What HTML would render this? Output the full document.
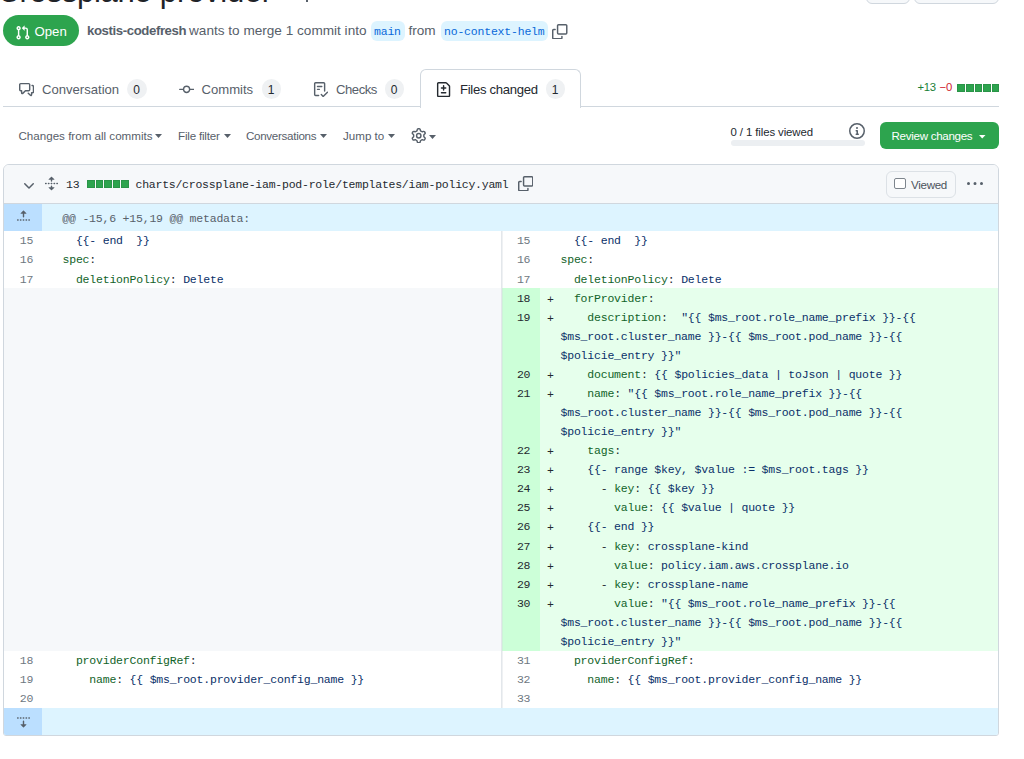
<!DOCTYPE html><html><head><meta charset="utf-8"><style>
html,body{margin:0;padding:0;background:#fff;}
body{width:1024px;height:759px;overflow:hidden;position:relative;font-family:"Liberation Sans",sans-serif;}
.abs{position:absolute;}
</style></head><body>
<div style="position:absolute;left:-2.5px;top:-23.94px;font-family:'Liberation Sans',sans-serif;font-size:31px;font-weight:400;color:#1f2328;letter-spacing:-0.3px;white-space:pre;line-height:1;">Crossplane <span style="letter-spacing:0.06px">provider</span></div>
<div class="abs" style="left:305.5px;top:0;width:2px;height:1.8px;background:#57606a"></div>
<div class="abs" style="left:866px;top:-30px;width:42px;height:32px;background:#f6f8fa;border:1px solid #d0d7de;border-radius:6px"></div>
<div class="abs" style="left:914px;top:-30px;width:83px;height:32px;background:#f6f8fa;border:1px solid #d0d7de;border-radius:6px"></div>
<div class="abs" style="left:3px;top:15px;width:76px;height:31px;background:#2da44e;border-radius:16px"></div>
<svg style="position:absolute;left:15.1px;top:24.8px;" width="15.4" height="15.4" viewBox="0 0 16 16" fill="#fff"><path d="M1.5 3.25a2.25 2.25 0 1 1 3 2.122v5.256a2.251 2.251 0 1 1-1.5 0V5.372A2.25 2.25 0 0 1 1.5 3.25Zm5.677-.177L9.573.677A.25.25 0 0 1 10 .854V2.5h1A2.5 2.5 0 0 1 13.5 5v5.628a2.251 2.251 0 1 1-1.5 0V5a1 1 0 0 0-1-1h-1v1.646a.25.25 0 0 1-.427.177L7.177 3.427a.25.25 0 0 1 0-.354ZM3.75 2.5a.75.75 0 1 0 0 1.5.75.75 0 0 0 0-1.5Zm0 9.5a.75.75 0 1 0 0 1.5.75.75 0 0 0 0-1.5Zm8.25.75a.75.75 0 1 0 1.5 0 .75.75 0 0 0-1.5 0Z"/></svg>
<div style="position:absolute;left:34.5px;top:24.83px;font-family:'Liberation Sans',sans-serif;font-size:13.2px;font-weight:400;color:#fff;letter-spacing:0px;white-space:pre;line-height:1;">Open</div>
<div style="position:absolute;left:87px;top:24.33px;font-family:'Liberation Sans',sans-serif;font-size:13.2px;font-weight:700;color:#57606a;letter-spacing:-0.4px;white-space:pre;line-height:1;">kostis-codefresh</div>
<div style="position:absolute;left:189px;top:23.99px;font-family:'Liberation Sans',sans-serif;font-size:13.6px;font-weight:400;color:#57606a;letter-spacing:0px;white-space:pre;line-height:1;">wants to merge 1 commit into</div>
<div class="abs" style="left:370.5px;top:21px;width:34.5px;height:20px;background:#ddf4ff;border-radius:6px"></div>
<div style="position:absolute;left:374px;top:26.19px;font-family:'Liberation Mono',monospace;font-size:11.5px;font-weight:400;color:#0969da;letter-spacing:-0.2px;white-space:pre;line-height:1;">main</div>
<div style="position:absolute;left:408.5px;top:23.99px;font-family:'Liberation Sans',sans-serif;font-size:13.6px;font-weight:400;color:#57606a;letter-spacing:0px;white-space:pre;line-height:1;">from</div>
<div class="abs" style="left:440.5px;top:21px;width:107.5px;height:20px;background:#ddf4ff;border-radius:6px"></div>
<div style="position:absolute;left:444px;top:26.19px;font-family:'Liberation Mono',monospace;font-size:11.5px;font-weight:400;color:#0969da;letter-spacing:-0.2px;white-space:pre;line-height:1;">no-context-helm</div>
<svg style="position:absolute;left:552px;top:23.5px;" width="15.5" height="15.5" viewBox="0 0 16 16" fill="#57606a"><path d="M0 6.75C0 5.784.784 5 1.75 5h1.5a.75.75 0 0 1 0 1.5h-1.5a.25.25 0 0 0-.25.25v7.5c0 .138.112.25.25.25h7.5a.25.25 0 0 0 .25-.25v-1.5a.75.75 0 0 1 1.5 0v1.5A1.75 1.75 0 0 1 9.25 16h-7.5A1.75 1.75 0 0 1 0 14.25ZM5 1.75C5 .784 5.784 0 6.75 0h7.5C15.216 0 16 .784 16 1.75v7.5A1.75 1.75 0 0 1 14.25 11h-7.5A1.75 1.75 0 0 1 5 9.25Zm1.75-.25a.25.25 0 0 0-.25.25v7.5c0 .138.112.25.25.25h7.5a.25.25 0 0 0 .25-.25v-7.5a.25.25 0 0 0-.25-.25Z"/></svg>
<div class="abs" style="left:3px;top:106px;width:996px;height:1px;background:#d0d7de"></div>
<div class="abs" style="left:420px;top:68.5px;width:159px;height:38.5px;background:#fff;border:1px solid #d0d7de;border-bottom:none;border-radius:6px 6px 0 0"></div>
<svg style="position:absolute;left:19px;top:82px;" width="15.2" height="15.2" viewBox="0 0 16 16" fill="#57606a"><path d="M1.75 1h8.5c.966 0 1.75.784 1.75 1.75v5.5A1.75 1.75 0 0 1 10.25 10H7.061l-2.574 2.573A1.458 1.458 0 0 1 2 11.543V10h-.25A1.75 1.75 0 0 1 0 8.25v-5.5C0 1.784.784 1 1.75 1ZM1.5 2.75v5.5c0 .138.112.25.25.25h1a.75.75 0 0 1 .75.75v2.19l2.72-2.72a.749.749 0 0 1 .53-.22h3.5a.25.25 0 0 0 .25-.25v-5.5a.25.25 0 0 0-.25-.25h-8.5a.25.25 0 0 0-.25.25Zm13 2a.25.25 0 0 0-.25-.25h-.5a.75.75 0 0 1 0-1.5h.5c.966 0 1.75.784 1.75 1.75v5.5A1.75 1.75 0 0 1 14.25 12H14v1.543a1.458 1.458 0 0 1-2.487 1.030L9.22 12.28a.749.749 0 0 1 .326-1.275.749.749 0 0 1 .734.215l2.22 2.22v-2.19a.75.75 0 0 1 .75-.75h1a.25.25 0 0 0 .25-.25Z"/></svg>
<div style="position:absolute;left:42px;top:82.71px;font-family:'Liberation Sans',sans-serif;font-size:13.1px;font-weight:400;color:#57606a;letter-spacing:0px;white-space:pre;line-height:1;">Conversation</div>
<div class="abs" style="left:127px;top:79px;width:19.5px;height:19.5px;border-radius:10px;background:#eff1f3"></div><div style="position:absolute;left:133.3px;top:83.64px;font-family:'Liberation Sans',sans-serif;font-size:12px;font-weight:400;color:#24292f;letter-spacing:0px;white-space:pre;line-height:1;">0</div>
<svg style="position:absolute;left:178.5px;top:82px;" width="15.2" height="15.2" viewBox="0 0 16 16" fill="#57606a"><path d="M11.93 8.5a4.002 4.002 0 0 1-7.86 0H.75a.75.75 0 0 1 0-1.5h3.32a4.002 4.002 0 0 1 7.86 0h3.32a.75.75 0 0 1 0 1.5Zm-1.43-.75a2.5 2.5 0 1 0-5 0 2.5 2.5 0 0 0 5 0Z"/></svg>
<div style="position:absolute;left:201.5px;top:82.71px;font-family:'Liberation Sans',sans-serif;font-size:13.1px;font-weight:400;color:#57606a;letter-spacing:0px;white-space:pre;line-height:1;">Commits</div>
<div class="abs" style="left:261.5px;top:79px;width:19.5px;height:19.5px;border-radius:10px;background:#eff1f3"></div><div style="position:absolute;left:267.8px;top:83.64px;font-family:'Liberation Sans',sans-serif;font-size:12px;font-weight:400;color:#24292f;letter-spacing:0px;white-space:pre;line-height:1;">1</div>
<svg style="position:absolute;left:313.3px;top:82px;" width="15.2" height="15.2" viewBox="0 0 16 16" fill="#57606a"><path d="M2.5 1.75v11.5c0 .138.112.25.25.25h3.17a.75.75 0 0 1 0 1.5H2.75A1.75 1.75 0 0 1 1 13.250V1.75C1 .784 1.784 0 2.75 0h8.5C12.216 0 13 .784 13 1.75v7.736a.75.75 0 0 1-1.5 0V1.75a.25.25 0 0 0-.25-.25h-8.5a.25.25 0 0 0-.25.25Zm13.274 9.537v-.001l-4.557 4.45a.75.75 0 0 1-1.055-.008l-1.943-1.95a.75.75 0 0 1 1.062-1.058l1.419 1.425 4.026-3.932a.75.75 0 1 1 1.048 1.074ZM4.75 4h4.5a.75.75 0 0 1 0 1.5h-4.5a.75.75 0 0 1 0-1.5ZM4 7.75A.75.75 0 0 1 4.75 7h2a.75.75 0 0 1 0 1.5h-2A.75.75 0 0 1 4 7.75Z"/></svg>
<div style="position:absolute;left:336px;top:82.71px;font-family:'Liberation Sans',sans-serif;font-size:13.1px;font-weight:400;color:#57606a;letter-spacing:-0.45px;white-space:pre;line-height:1;">Checks</div>
<div class="abs" style="left:384.5px;top:79px;width:19.5px;height:19.5px;border-radius:10px;background:#eff1f3"></div><div style="position:absolute;left:390.8px;top:83.64px;font-family:'Liberation Sans',sans-serif;font-size:12px;font-weight:400;color:#24292f;letter-spacing:0px;white-space:pre;line-height:1;">0</div>
<svg style="position:absolute;left:436.3px;top:82px;" width="15.2" height="15.2" viewBox="0 0 16 16" fill="#24292f"><path d="M1 1.75C1 .784 1.784 0 2.75 0h7.586c.464 0 .909.184 1.237.513l2.914 2.914c.329.328.513.773.513 1.237v9.586A1.75 1.75 0 0 1 13.25 16H2.75A1.75 1.75 0 0 1 1 14.25Zm1.75-.25a.25.25 0 0 0-.25.25v12.5c0 .138.112.25.25.25h10.5a.25.25 0 0 0 .25-.25V4.664a.25.25 0 0 0-.073-.177l-2.914-2.914a.25.25 0 0 0-.177-.073ZM8 3.25a.75.75 0 0 1 .75.75v1.5h1.5a.75.75 0 0 1 0 1.5h-1.5v1.5a.75.75 0 0 1-1.5 0V7h-1.5a.75.75 0 0 1 0-1.5h1.5V4A.75.75 0 0 1 8 3.25Zm-3 8a.75.75 0 0 1 .75-.75h4.5a.75.75 0 0 1 0 1.5h-4.5a.75.75 0 0 1-.75-.75Z"/></svg>
<div style="position:absolute;left:460px;top:82.71px;font-family:'Liberation Sans',sans-serif;font-size:13.1px;font-weight:400;color:#24292f;letter-spacing:-0.3px;white-space:pre;line-height:1;">Files changed</div>
<div class="abs" style="left:545.5px;top:79px;width:19.5px;height:19.5px;border-radius:10px;background:#eff1f3"></div><div style="position:absolute;left:551.8px;top:83.64px;font-family:'Liberation Sans',sans-serif;font-size:12px;font-weight:400;color:#24292f;letter-spacing:0px;white-space:pre;line-height:1;">1</div>
<div style="position:absolute;left:917.5px;top:82.43px;font-family:'Liberation Sans',sans-serif;font-size:11.3px;font-weight:400;color:#1a7f37;letter-spacing:-0.3px;white-space:pre;line-height:1;">+13</div>
<div style="position:absolute;left:939.5px;top:82.43px;font-family:'Liberation Sans',sans-serif;font-size:11.3px;font-weight:400;color:#cf222e;letter-spacing:0px;white-space:pre;line-height:1;">−0</div>
<div class="abs" style="left:957px;top:84px;width:8px;height:8px;background:#2da44e;box-shadow:inset 0 0 0 1px rgba(27,31,36,0.12)"></div>
<div class="abs" style="left:966px;top:84px;width:8px;height:8px;background:#2da44e;box-shadow:inset 0 0 0 1px rgba(27,31,36,0.12)"></div>
<div class="abs" style="left:975px;top:84px;width:7px;height:8px;background:#2da44e;box-shadow:inset 0 0 0 1px rgba(27,31,36,0.12)"></div>
<div class="abs" style="left:983px;top:84px;width:8px;height:8px;background:#2da44e;box-shadow:inset 0 0 0 1px rgba(27,31,36,0.12)"></div>
<div class="abs" style="left:992px;top:84px;width:7px;height:8px;background:#2da44e;box-shadow:inset 0 0 0 1px rgba(27,31,36,0.12)"></div>
<div style="position:absolute;left:18.5px;top:130.18px;font-family:'Liberation Sans',sans-serif;font-size:11.6px;font-weight:400;color:#57606a;letter-spacing:0px;white-space:pre;line-height:1;">Changes from all commits</div>
<svg style="position:absolute;left:155px;top:134.2px" width="7" height="4" viewBox="0 0 7 4"><path d="M0 0H7L3.5 4Z" fill="#57606a"/></svg>
<div style="position:absolute;left:178px;top:130.18px;font-family:'Liberation Sans',sans-serif;font-size:11.6px;font-weight:400;color:#57606a;letter-spacing:-0.2px;white-space:pre;line-height:1;">File filter</div>
<svg style="position:absolute;left:224px;top:134.2px" width="7" height="4" viewBox="0 0 7 4"><path d="M0 0H7L3.5 4Z" fill="#57606a"/></svg>
<div style="position:absolute;left:246px;top:130.18px;font-family:'Liberation Sans',sans-serif;font-size:11.6px;font-weight:400;color:#57606a;letter-spacing:-0.3px;white-space:pre;line-height:1;">Conversations</div>
<svg style="position:absolute;left:320px;top:134.2px" width="7" height="4" viewBox="0 0 7 4"><path d="M0 0H7L3.5 4Z" fill="#57606a"/></svg>
<div style="position:absolute;left:343px;top:130.18px;font-family:'Liberation Sans',sans-serif;font-size:11.6px;font-weight:400;color:#57606a;letter-spacing:0px;white-space:pre;line-height:1;">Jump to</div>
<svg style="position:absolute;left:388px;top:134.2px" width="7" height="4" viewBox="0 0 7 4"><path d="M0 0H7L3.5 4Z" fill="#57606a"/></svg>
<svg style="position:absolute;left:410.5px;top:127.5px;" width="15.5" height="15.5" viewBox="0 0 16 16" fill="#57606a"><path d="M8 0a8.2 8.2 0 0 1 .701.031C9.444.095 9.99.645 10.16 1.29l.288 1.107c.018.066.079.158.212.224.231.114.454.243.668.386.123.082.233.09.299.071l1.103-.303c.644-.176 1.392.021 1.82.63.27.385.506.792.704 1.218.315.675.111 1.422-.364 1.891l-.814.806c-.049.048-.098.147-.088.294.016.257.016.515 0 .772-.01.147.038.246.088.294l.814.806c.475.469.679 1.216.364 1.891a7.977 7.977 0 0 1-.704 1.217c-.428.61-1.176.807-1.82.63l-1.102-.302c-.067-.019-.177-.011-.3.071a5.909 5.909 0 0 1-.668.386c-.133.066-.194.158-.211.224l-.29 1.106c-.168.646-.715 1.196-1.458 1.26a8.006 8.006 0 0 1-1.402 0c-.743-.064-1.289-.614-1.458-1.26l-.289-1.106c-.018-.066-.079-.158-.212-.224a5.738 5.738 0 0 1-.668-.386c-.123-.082-.233-.09-.299-.071l-1.103.303c-.644.176-1.392-.021-1.82-.63a8.12 8.12 0 0 1-.704-1.218c-.315-.675-.111-1.422.363-1.891l.815-.806c.05-.048.098-.147.088-.294a6.214 6.214 0 0 1 0-.772c.01-.147-.038-.246-.088-.294l-.815-.806C.635 6.045.431 5.298.746 4.623a7.92 7.92 0 0 1 .704-1.217c.428-.61 1.176-.807 1.82-.63l1.102.302c.067.019.177.011.3-.071.214-.143.437-.272.668-.386.133-.066.194-.158.211-.224l.29-1.106C6.009.645 6.556.095 7.299.03 7.53.01 7.764 0 8 0Zm-.571 1.525c-.036.003-.108.036-.137.146l-.289 1.105c-.147.561-.549.967-.998 1.189-.173.086-.34.183-.5.29-.417.278-.97.423-1.529.27l-1.103-.303c-.109-.03-.175.016-.195.045-.22.312-.412.644-.573.99-.014.031-.021.11.059.19l.815.806c.411.406.562.957.53 1.456a4.709 4.709 0 0 0 0 .582c.032.499-.119 1.05-.53 1.456l-.815.806c-.081.08-.073.159-.059.19.162.346.353.677.573.989.02.03.085.076.195.046l1.102-.303c.56-.153 1.113-.008 1.53.27.161.107.328.204.501.29.447.222.85.629.997 1.189l.289 1.105c.029.109.101.143.137.146a6.6 6.6 0 0 0 1.142 0c.036-.003.108-.036.137-.146l.289-1.105c.147-.561.549-.967.998-1.189.173-.086.34-.183.5-.29.417-.278.97-.423 1.529-.27l1.103.303c.109.029.175-.016.195-.045.22-.313.411-.644.573-.99.014-.031.021-.11-.059-.19l-.815-.806c-.411-.406-.562-.957-.53-1.456a4.709 4.709 0 0 0 0-.582c-.032-.499.119-1.05.53-1.456l.815-.806c.081-.08.073-.159.059-.19a6.464 6.464 0 0 0-.573-.989c-.02-.03-.085-.076-.195-.046l-1.102.303c-.56.153-1.113.008-1.53-.27a4.440 4.440 0 0 0-.501-.29c-.447-.222-.85-.629-.997-1.189l-.289-1.105c-.029-.11-.101-.143-.137-.146a6.6 6.6 0 0 0-1.142 0ZM11 8a3 3 0 1 1-6 0 3 3 0 0 1 6 0ZM9.5 8a1.5 1.5 0 1 0-3.001.001A1.5 1.5 0 0 0 9.5 8Z"/></svg>
<svg style="position:absolute;left:429px;top:135px" width="7" height="4" viewBox="0 0 7 4"><path d="M0 0H7L3.5 4Z" fill="#57606a"/></svg>
<div style="position:absolute;left:730.5px;top:126.55px;font-family:'Liberation Sans',sans-serif;font-size:11.4px;font-weight:400;color:#24292f;letter-spacing:-0.1px;white-space:pre;line-height:1;">0 / 1 files viewed</div>
<div class="abs" style="left:731px;top:139.5px;width:133.5px;height:6.5px;background:#eceff2;border-radius:4px"></div>
<svg style="position:absolute;left:848.8px;top:122.8px;" width="16" height="16" viewBox="0 0 16 16" fill="#57606a"><path d="M0 8a8 8 0 1 1 16 0A8 8 0 0 1 0 8Zm8-6.5a6.5 6.5 0 1 0 0 13 6.5 6.5 0 0 0 0-13ZM6.5 7.75A.75.75 0 0 1 7.25 7h1a.75.75 0 0 1 .75.75v2.75h.25a.75.75 0 0 1 0 1.5h-2a.75.75 0 0 1 0-1.5h.25v-2h-.25a.75.75 0 0 1-.75-.75ZM8 6a1 1 0 1 1 0-2 1 1 0 0 1 0 2Z"/></svg>
<div class="abs" style="left:880px;top:122px;width:119px;height:26.5px;background:#2da44e;border-radius:6px"></div>
<div style="position:absolute;left:891.5px;top:130.18px;font-family:'Liberation Sans',sans-serif;font-size:11.6px;font-weight:400;color:#fff;letter-spacing:-0.3px;white-space:pre;line-height:1;">Review changes</div>
<svg style="position:absolute;left:979px;top:135.2px" width="6.5" height="3.6" viewBox="0 0 6.5 3.6"><path d="M0 0H6.5L3.25 3.6Z" fill="#fff"/></svg>
<div class="abs" style="left:3px;top:164px;width:994px;height:570px;border:1px solid #d0d7de;border-radius:6px 6px 3px 3px;overflow:hidden;background:#fff">
<div class="abs" style="left:0;top:0;width:994px;height:38px;background:#f6f8fa;border-bottom:1px solid #d0d7de"></div>
<svg style="position:absolute;left:16.5px;top:12.5px;" width="16" height="16" viewBox="0 0 16 16" fill="#57606a"><path d="M12.78 5.22a.749.749 0 0 1 0 1.06l-4.25 4.25a.749.749 0 0 1-1.06 0L3.22 6.28a.749.749 0 1 1 1.06-1.06L8 8.939l3.72-3.719a.749.749 0 0 1 1.06 0Z"/></svg>
<svg style="position:absolute;left:40px;top:11px;" width="15" height="15" viewBox="0 0 16 16" fill="#57606a"><path d="m8.177.677 2.896 2.896a.25.25 0 0 1-.177.427H8.75v1.25a.75.75 0 0 1-1.5 0V4H5.104a.25.25 0 0 1-.177-.427L7.823.677a.25.25 0 0 1 .354 0ZM7.25 10.750a.75.75 0 0 1 1.5 0V12h2.146a.25.25 0 0 1 .177.427l-2.896 2.896a.25.25 0 0 1-.354 0l-2.896-2.896A.25.25 0 0 1 5.104 12H7.25v-1.25Zm-5-2a.75.75 0 0 0 0-1.5h-.5a.75.75 0 0 0 0 1.5h.5ZM6 8a.75.75 0 0 1-.75.75h-.5a.75.75 0 0 1 0-1.5h.5A.75.75 0 0 1 6 8Zm2.25.75a.75.75 0 0 0 0-1.5h-.5a.75.75 0 0 0 0 1.5h.5ZM12 8a.75.75 0 0 1-.75.75h-.5a.75.75 0 0 1 0-1.5h.5A.75.75 0 0 1 12 8Zm2.25.75a.75.75 0 0 0 0-1.5h-.5a.75.75 0 0 0 0 1.5h.5Z"/></svg>
<div style="position:absolute;left:62px;top:13.79px;font-family:'Liberation Mono',monospace;font-size:11.5px;font-weight:400;color:#24292f;letter-spacing:-0.2px;white-space:pre;line-height:1;">13</div>
<div class="abs" style="left:83px;top:15px;width:8px;height:8px;background:#2da44e;box-shadow:inset 0 0 0 1px rgba(27,31,36,0.12)"></div>
<div class="abs" style="left:92px;top:15px;width:7px;height:8px;background:#2da44e;box-shadow:inset 0 0 0 1px rgba(27,31,36,0.12)"></div>
<div class="abs" style="left:100px;top:15px;width:8px;height:8px;background:#2da44e;box-shadow:inset 0 0 0 1px rgba(27,31,36,0.12)"></div>
<div class="abs" style="left:109px;top:15px;width:7px;height:8px;background:#2da44e;box-shadow:inset 0 0 0 1px rgba(27,31,36,0.12)"></div>
<div class="abs" style="left:117px;top:15px;width:8px;height:8px;background:#2da44e;box-shadow:inset 0 0 0 1px rgba(27,31,36,0.12)"></div>
<div style="position:absolute;left:131.5px;top:13.79px;font-family:'Liberation Mono',monospace;font-size:11.5px;font-weight:400;color:#24292f;letter-spacing:-0.242px;white-space:pre;line-height:1;">charts/crossplane-iam-pod-role/templates/iam-policy.yaml</div>
<svg style="position:absolute;left:513.5px;top:10.5px;" width="15.5" height="15.5" viewBox="0 0 16 16" fill="#57606a"><path d="M0 6.75C0 5.784.784 5 1.75 5h1.5a.75.75 0 0 1 0 1.5h-1.5a.25.25 0 0 0-.25.25v7.5c0 .138.112.25.25.25h7.5a.25.25 0 0 0 .25-.25v-1.5a.75.75 0 0 1 1.5 0v1.5A1.75 1.75 0 0 1 9.25 16h-7.5A1.75 1.75 0 0 1 0 14.25ZM5 1.75C5 .784 5.784 0 6.75 0h7.5C15.216 0 16 .784 16 1.75v7.5A1.75 1.75 0 0 1 14.25 11h-7.5A1.75 1.75 0 0 1 5 9.25Zm1.75-.25a.25.25 0 0 0-.25.25v7.5c0 .138.112.25.25.25h7.5a.25.25 0 0 0 .25-.25v-7.5a.25.25 0 0 0-.25-.25Z"/></svg>
<div class="abs" style="left:881.5px;top:6px;width:68px;height:24.8px;border:1px solid #dce1e6;border-radius:6px;background:#f6f8fa"></div>
<div class="abs" style="left:890px;top:12.8px;width:9.6px;height:9.6px;border:1.8px solid #7d858d;border-radius:2px;background:#fff"></div>
<div style="position:absolute;left:907px;top:13.68px;font-family:'Liberation Sans',sans-serif;font-size:11.6px;font-weight:400;color:#4b535c;letter-spacing:-0.3px;white-space:pre;line-height:1;">Viewed</div>
<svg style="position:absolute;left:963px;top:11px;" width="16" height="16" viewBox="0 0 16 16" fill="#57606a"><path d="M8 9a1.5 1.5 0 1 0 0-3 1.5 1.5 0 0 0 0 3ZM1.5 9a1.5 1.5 0 1 0 0-3 1.5 1.5 0 0 0 0 3Zm13 0a1.5 1.5 0 1 0 0-3 1.5 1.5 0 0 0 0 3Z"/></svg>
<div class="abs" style="left:0;top:39px;width:994px;height:27px;background:#ddf4ff"></div>
<div class="abs" style="left:0;top:39px;width:38px;height:27px;background:#bbdfff"></div>
<svg style="position:absolute;left:12px;top:43.5px;" width="15" height="15" viewBox="0 0 16 16" fill="#57606a"><path d="M7.823 1.677 4.927 4.573A.25.25 0 0 0 5.104 5H7.25v3.236a.75.75 0 1 0 1.5 0V5h2.146a.25.25 0 0 0 .177-.427L8.177 1.677a.25.25 0 0 0-.354 0ZM13.75 11a.75.75 0 0 0 0 1.5h.5a.75.75 0 0 0 0-1.5h-.5Zm-3.75.75a.75.75 0 0 1 .75-.75h.5a.75.75 0 0 1 0 1.5h-.5a.75.75 0 0 1-.75-.75ZM7.75 11a.75.75 0 0 0 0 1.5h.5a.75.75 0 0 0 0-1.5h-.5ZM4 11.75a.75.75 0 0 1 .75-.75h.5a.75.75 0 0 1 0 1.5h-.5a.75.75 0 0 1-.75-.75ZM1.75 11a.75.75 0 0 0 0 1.5h.5a.75.75 0 0 0 0-1.5h-.5Z"/></svg>
<div style="position:absolute;left:58.3px;top:48.19px;font-family:'Liberation Mono',monospace;font-size:11.5px;font-weight:400;color:#57606a;letter-spacing:-0.2px;white-space:pre;line-height:1;">@@ -15,6 +15,19 @@ metadata:</div>
<div style="position:absolute;left:15.7px;top:70.39px;font-family:'Liberation Mono',monospace;font-size:11.5px;font-weight:400;color:#6e7781;letter-spacing:-0.2px;white-space:pre;line-height:1;">15</div>
<div style="position:absolute;left:58.5px;top:70.39px;font-family:'Liberation Mono',monospace;font-size:11.5px;font-weight:400;color:#24292f;letter-spacing:-0.2px;white-space:pre;line-height:1;"><span style="color:#0a3069">  {{- end  }}</span></div>
<div style="position:absolute;left:512.9px;top:70.39px;font-family:'Liberation Mono',monospace;font-size:11.5px;font-weight:400;color:#6e7781;letter-spacing:-0.2px;white-space:pre;line-height:1;">15</div>
<div style="position:absolute;left:556.5px;top:70.39px;font-family:'Liberation Mono',monospace;font-size:11.5px;font-weight:400;color:#24292f;letter-spacing:-0.2px;white-space:pre;line-height:1;"><span style="color:#0a3069">  {{- end  }}</span></div>
<div style="position:absolute;left:15.7px;top:89.46px;font-family:'Liberation Mono',monospace;font-size:11.5px;font-weight:400;color:#6e7781;letter-spacing:-0.2px;white-space:pre;line-height:1;">16</div>
<div style="position:absolute;left:58.5px;top:89.46px;font-family:'Liberation Mono',monospace;font-size:11.5px;font-weight:400;color:#24292f;letter-spacing:-0.2px;white-space:pre;line-height:1;"><span style="color:#116329">spec</span><span style="color:#24292f">:</span><span style="color:#0a3069"></span></div>
<div style="position:absolute;left:512.9px;top:89.46px;font-family:'Liberation Mono',monospace;font-size:11.5px;font-weight:400;color:#6e7781;letter-spacing:-0.2px;white-space:pre;line-height:1;">16</div>
<div style="position:absolute;left:556.5px;top:89.46px;font-family:'Liberation Mono',monospace;font-size:11.5px;font-weight:400;color:#24292f;letter-spacing:-0.2px;white-space:pre;line-height:1;"><span style="color:#116329">spec</span><span style="color:#24292f">:</span><span style="color:#0a3069"></span></div>
<div style="position:absolute;left:15.7px;top:108.53px;font-family:'Liberation Mono',monospace;font-size:11.5px;font-weight:400;color:#6e7781;letter-spacing:-0.2px;white-space:pre;line-height:1;">17</div>
<div style="position:absolute;left:58.5px;top:108.53px;font-family:'Liberation Mono',monospace;font-size:11.5px;font-weight:400;color:#24292f;letter-spacing:-0.2px;white-space:pre;line-height:1;">  <span style="color:#116329">deletionPolicy</span><span style="color:#24292f">:</span><span style="color:#0a3069"> Delete</span></div>
<div style="position:absolute;left:512.9px;top:108.53px;font-family:'Liberation Mono',monospace;font-size:11.5px;font-weight:400;color:#6e7781;letter-spacing:-0.2px;white-space:pre;line-height:1;">17</div>
<div style="position:absolute;left:556.5px;top:108.53px;font-family:'Liberation Mono',monospace;font-size:11.5px;font-weight:400;color:#24292f;letter-spacing:-0.2px;white-space:pre;line-height:1;">  <span style="color:#116329">deletionPolicy</span><span style="color:#24292f">:</span><span style="color:#0a3069"> Delete</span></div>
<div class="abs" style="left:0;top:123px;width:497px;height:19px;background:#f6f8fa"></div>
<div class="abs" style="left:498px;top:123px;width:38px;height:19px;background:#ccffd8"></div>
<div class="abs" style="left:536px;top:123px;width:458px;height:19px;background:#e6ffec"></div>
<div style="position:absolute;left:512.9px;top:127.6px;font-family:'Liberation Mono',monospace;font-size:11.5px;font-weight:400;color:#24292f;letter-spacing:-0.2px;white-space:pre;line-height:1;">18</div>
<div style="position:absolute;left:543px;top:128.6px;font-family:'Liberation Mono',monospace;font-size:11.5px;font-weight:400;color:#24292f;letter-spacing:-0.2px;white-space:pre;line-height:1;">+</div>
<div style="position:absolute;left:556.5px;top:127.6px;font-family:'Liberation Mono',monospace;font-size:11.5px;font-weight:400;color:#24292f;letter-spacing:-0.2px;white-space:pre;line-height:1;">  <span style="color:#116329">forProvider</span><span style="color:#24292f">:</span><span style="color:#0a3069"></span></div>
<div class="abs" style="left:0;top:142px;width:497px;height:19px;background:#f6f8fa"></div>
<div class="abs" style="left:498px;top:142px;width:38px;height:19px;background:#ccffd8"></div>
<div class="abs" style="left:536px;top:142px;width:458px;height:19px;background:#e6ffec"></div>
<div style="position:absolute;left:512.9px;top:146.67px;font-family:'Liberation Mono',monospace;font-size:11.5px;font-weight:400;color:#24292f;letter-spacing:-0.2px;white-space:pre;line-height:1;">19</div>
<div style="position:absolute;left:543px;top:147.67px;font-family:'Liberation Mono',monospace;font-size:11.5px;font-weight:400;color:#24292f;letter-spacing:-0.2px;white-space:pre;line-height:1;">+</div>
<div style="position:absolute;left:556.5px;top:146.67px;font-family:'Liberation Mono',monospace;font-size:11.5px;font-weight:400;color:#24292f;letter-spacing:-0.2px;white-space:pre;line-height:1;">    <span style="color:#116329">description</span><span style="color:#24292f">:</span><span style="color:#0a3069">  &quot;{{ $ms_root.role_name_prefix }}-{{</span></div>
<div class="abs" style="left:0;top:161px;width:497px;height:19px;background:#f6f8fa"></div>
<div class="abs" style="left:498px;top:161px;width:38px;height:19px;background:#ccffd8"></div>
<div class="abs" style="left:536px;top:161px;width:458px;height:19px;background:#e6ffec"></div>
<div style="position:absolute;left:556.5px;top:165.74px;font-family:'Liberation Mono',monospace;font-size:11.5px;font-weight:400;color:#24292f;letter-spacing:-0.2px;white-space:pre;line-height:1;"><span style="color:#0a3069">$ms_root.cluster_name }}-{{ $ms_root.pod_name }}-{{</span></div>
<div class="abs" style="left:0;top:180px;width:497px;height:19px;background:#f6f8fa"></div>
<div class="abs" style="left:498px;top:180px;width:38px;height:19px;background:#ccffd8"></div>
<div class="abs" style="left:536px;top:180px;width:458px;height:19px;background:#e6ffec"></div>
<div style="position:absolute;left:556.5px;top:184.81px;font-family:'Liberation Mono',monospace;font-size:11.5px;font-weight:400;color:#24292f;letter-spacing:-0.2px;white-space:pre;line-height:1;"><span style="color:#0a3069">$policie_entry }}&quot;</span></div>
<div class="abs" style="left:0;top:199px;width:497px;height:20px;background:#f6f8fa"></div>
<div class="abs" style="left:498px;top:199px;width:38px;height:20px;background:#ccffd8"></div>
<div class="abs" style="left:536px;top:199px;width:458px;height:20px;background:#e6ffec"></div>
<div style="position:absolute;left:512.9px;top:203.88px;font-family:'Liberation Mono',monospace;font-size:11.5px;font-weight:400;color:#24292f;letter-spacing:-0.2px;white-space:pre;line-height:1;">20</div>
<div style="position:absolute;left:543px;top:204.88px;font-family:'Liberation Mono',monospace;font-size:11.5px;font-weight:400;color:#24292f;letter-spacing:-0.2px;white-space:pre;line-height:1;">+</div>
<div style="position:absolute;left:556.5px;top:203.88px;font-family:'Liberation Mono',monospace;font-size:11.5px;font-weight:400;color:#24292f;letter-spacing:-0.2px;white-space:pre;line-height:1;">    <span style="color:#116329">document</span><span style="color:#24292f">:</span><span style="color:#0a3069"> {{ $policies_data | toJson | quote }}</span></div>
<div class="abs" style="left:0;top:219px;width:497px;height:19px;background:#f6f8fa"></div>
<div class="abs" style="left:498px;top:219px;width:38px;height:19px;background:#ccffd8"></div>
<div class="abs" style="left:536px;top:219px;width:458px;height:19px;background:#e6ffec"></div>
<div style="position:absolute;left:512.9px;top:222.95px;font-family:'Liberation Mono',monospace;font-size:11.5px;font-weight:400;color:#24292f;letter-spacing:-0.2px;white-space:pre;line-height:1;">21</div>
<div style="position:absolute;left:543px;top:223.95px;font-family:'Liberation Mono',monospace;font-size:11.5px;font-weight:400;color:#24292f;letter-spacing:-0.2px;white-space:pre;line-height:1;">+</div>
<div style="position:absolute;left:556.5px;top:222.95px;font-family:'Liberation Mono',monospace;font-size:11.5px;font-weight:400;color:#24292f;letter-spacing:-0.2px;white-space:pre;line-height:1;">    <span style="color:#116329">name</span><span style="color:#24292f">:</span><span style="color:#0a3069"> &quot;{{ $ms_root.role_name_prefix }}-{{</span></div>
<div class="abs" style="left:0;top:238px;width:497px;height:19px;background:#f6f8fa"></div>
<div class="abs" style="left:498px;top:238px;width:38px;height:19px;background:#ccffd8"></div>
<div class="abs" style="left:536px;top:238px;width:458px;height:19px;background:#e6ffec"></div>
<div style="position:absolute;left:556.5px;top:242.02px;font-family:'Liberation Mono',monospace;font-size:11.5px;font-weight:400;color:#24292f;letter-spacing:-0.2px;white-space:pre;line-height:1;"><span style="color:#0a3069">$ms_root.cluster_name }}-{{ $ms_root.pod_name }}-{{</span></div>
<div class="abs" style="left:0;top:257px;width:497px;height:19px;background:#f6f8fa"></div>
<div class="abs" style="left:498px;top:257px;width:38px;height:19px;background:#ccffd8"></div>
<div class="abs" style="left:536px;top:257px;width:458px;height:19px;background:#e6ffec"></div>
<div style="position:absolute;left:556.5px;top:261.09px;font-family:'Liberation Mono',monospace;font-size:11.5px;font-weight:400;color:#24292f;letter-spacing:-0.2px;white-space:pre;line-height:1;"><span style="color:#0a3069">$policie_entry }}&quot;</span></div>
<div class="abs" style="left:0;top:276px;width:497px;height:19px;background:#f6f8fa"></div>
<div class="abs" style="left:498px;top:276px;width:38px;height:19px;background:#ccffd8"></div>
<div class="abs" style="left:536px;top:276px;width:458px;height:19px;background:#e6ffec"></div>
<div style="position:absolute;left:512.9px;top:280.16px;font-family:'Liberation Mono',monospace;font-size:11.5px;font-weight:400;color:#24292f;letter-spacing:-0.2px;white-space:pre;line-height:1;">22</div>
<div style="position:absolute;left:543px;top:281.16px;font-family:'Liberation Mono',monospace;font-size:11.5px;font-weight:400;color:#24292f;letter-spacing:-0.2px;white-space:pre;line-height:1;">+</div>
<div style="position:absolute;left:556.5px;top:280.16px;font-family:'Liberation Mono',monospace;font-size:11.5px;font-weight:400;color:#24292f;letter-spacing:-0.2px;white-space:pre;line-height:1;">    <span style="color:#116329">tags</span><span style="color:#24292f">:</span><span style="color:#0a3069"></span></div>
<div class="abs" style="left:0;top:295px;width:497px;height:19px;background:#f6f8fa"></div>
<div class="abs" style="left:498px;top:295px;width:38px;height:19px;background:#ccffd8"></div>
<div class="abs" style="left:536px;top:295px;width:458px;height:19px;background:#e6ffec"></div>
<div style="position:absolute;left:512.9px;top:299.23px;font-family:'Liberation Mono',monospace;font-size:11.5px;font-weight:400;color:#24292f;letter-spacing:-0.2px;white-space:pre;line-height:1;">23</div>
<div style="position:absolute;left:543px;top:300.23px;font-family:'Liberation Mono',monospace;font-size:11.5px;font-weight:400;color:#24292f;letter-spacing:-0.2px;white-space:pre;line-height:1;">+</div>
<div style="position:absolute;left:556.5px;top:299.23px;font-family:'Liberation Mono',monospace;font-size:11.5px;font-weight:400;color:#24292f;letter-spacing:-0.2px;white-space:pre;line-height:1;"><span style="color:#0a3069">    {{- range $key, $value := $ms_root.tags }}</span></div>
<div class="abs" style="left:0;top:314px;width:497px;height:19px;background:#f6f8fa"></div>
<div class="abs" style="left:498px;top:314px;width:38px;height:19px;background:#ccffd8"></div>
<div class="abs" style="left:536px;top:314px;width:458px;height:19px;background:#e6ffec"></div>
<div style="position:absolute;left:512.9px;top:318.3px;font-family:'Liberation Mono',monospace;font-size:11.5px;font-weight:400;color:#24292f;letter-spacing:-0.2px;white-space:pre;line-height:1;">24</div>
<div style="position:absolute;left:543px;top:319.3px;font-family:'Liberation Mono',monospace;font-size:11.5px;font-weight:400;color:#24292f;letter-spacing:-0.2px;white-space:pre;line-height:1;">+</div>
<div style="position:absolute;left:556.5px;top:318.3px;font-family:'Liberation Mono',monospace;font-size:11.5px;font-weight:400;color:#24292f;letter-spacing:-0.2px;white-space:pre;line-height:1;">      <span style="color:#24292f">- </span><span style="color:#116329">key</span><span style="color:#24292f">:</span><span style="color:#0a3069"> {{ $key }}</span></div>
<div class="abs" style="left:0;top:333px;width:497px;height:19px;background:#f6f8fa"></div>
<div class="abs" style="left:498px;top:333px;width:38px;height:19px;background:#ccffd8"></div>
<div class="abs" style="left:536px;top:333px;width:458px;height:19px;background:#e6ffec"></div>
<div style="position:absolute;left:512.9px;top:337.37px;font-family:'Liberation Mono',monospace;font-size:11.5px;font-weight:400;color:#24292f;letter-spacing:-0.2px;white-space:pre;line-height:1;">25</div>
<div style="position:absolute;left:543px;top:338.37px;font-family:'Liberation Mono',monospace;font-size:11.5px;font-weight:400;color:#24292f;letter-spacing:-0.2px;white-space:pre;line-height:1;">+</div>
<div style="position:absolute;left:556.5px;top:337.37px;font-family:'Liberation Mono',monospace;font-size:11.5px;font-weight:400;color:#24292f;letter-spacing:-0.2px;white-space:pre;line-height:1;">        <span style="color:#116329">value</span><span style="color:#24292f">:</span><span style="color:#0a3069"> {{ $value | quote }}</span></div>
<div class="abs" style="left:0;top:352px;width:497px;height:19px;background:#f6f8fa"></div>
<div class="abs" style="left:498px;top:352px;width:38px;height:19px;background:#ccffd8"></div>
<div class="abs" style="left:536px;top:352px;width:458px;height:19px;background:#e6ffec"></div>
<div style="position:absolute;left:512.9px;top:356.44px;font-family:'Liberation Mono',monospace;font-size:11.5px;font-weight:400;color:#24292f;letter-spacing:-0.2px;white-space:pre;line-height:1;">26</div>
<div style="position:absolute;left:543px;top:357.44px;font-family:'Liberation Mono',monospace;font-size:11.5px;font-weight:400;color:#24292f;letter-spacing:-0.2px;white-space:pre;line-height:1;">+</div>
<div style="position:absolute;left:556.5px;top:356.44px;font-family:'Liberation Mono',monospace;font-size:11.5px;font-weight:400;color:#24292f;letter-spacing:-0.2px;white-space:pre;line-height:1;"><span style="color:#0a3069">    {{- end }}</span></div>
<div class="abs" style="left:0;top:371px;width:497px;height:19px;background:#f6f8fa"></div>
<div class="abs" style="left:498px;top:371px;width:38px;height:19px;background:#ccffd8"></div>
<div class="abs" style="left:536px;top:371px;width:458px;height:19px;background:#e6ffec"></div>
<div style="position:absolute;left:512.9px;top:375.51px;font-family:'Liberation Mono',monospace;font-size:11.5px;font-weight:400;color:#24292f;letter-spacing:-0.2px;white-space:pre;line-height:1;">27</div>
<div style="position:absolute;left:543px;top:376.51px;font-family:'Liberation Mono',monospace;font-size:11.5px;font-weight:400;color:#24292f;letter-spacing:-0.2px;white-space:pre;line-height:1;">+</div>
<div style="position:absolute;left:556.5px;top:375.51px;font-family:'Liberation Mono',monospace;font-size:11.5px;font-weight:400;color:#24292f;letter-spacing:-0.2px;white-space:pre;line-height:1;">      <span style="color:#24292f">- </span><span style="color:#116329">key</span><span style="color:#24292f">:</span><span style="color:#0a3069"> crossplane-kind</span></div>
<div class="abs" style="left:0;top:390px;width:497px;height:19px;background:#f6f8fa"></div>
<div class="abs" style="left:498px;top:390px;width:38px;height:19px;background:#ccffd8"></div>
<div class="abs" style="left:536px;top:390px;width:458px;height:19px;background:#e6ffec"></div>
<div style="position:absolute;left:512.9px;top:394.58px;font-family:'Liberation Mono',monospace;font-size:11.5px;font-weight:400;color:#24292f;letter-spacing:-0.2px;white-space:pre;line-height:1;">28</div>
<div style="position:absolute;left:543px;top:395.58px;font-family:'Liberation Mono',monospace;font-size:11.5px;font-weight:400;color:#24292f;letter-spacing:-0.2px;white-space:pre;line-height:1;">+</div>
<div style="position:absolute;left:556.5px;top:394.58px;font-family:'Liberation Mono',monospace;font-size:11.5px;font-weight:400;color:#24292f;letter-spacing:-0.2px;white-space:pre;line-height:1;">        <span style="color:#116329">value</span><span style="color:#24292f">:</span><span style="color:#0a3069"> policy.iam.aws.crossplane.io</span></div>
<div class="abs" style="left:0;top:409px;width:497px;height:19px;background:#f6f8fa"></div>
<div class="abs" style="left:498px;top:409px;width:38px;height:19px;background:#ccffd8"></div>
<div class="abs" style="left:536px;top:409px;width:458px;height:19px;background:#e6ffec"></div>
<div style="position:absolute;left:512.9px;top:413.65px;font-family:'Liberation Mono',monospace;font-size:11.5px;font-weight:400;color:#24292f;letter-spacing:-0.2px;white-space:pre;line-height:1;">29</div>
<div style="position:absolute;left:543px;top:414.65px;font-family:'Liberation Mono',monospace;font-size:11.5px;font-weight:400;color:#24292f;letter-spacing:-0.2px;white-space:pre;line-height:1;">+</div>
<div style="position:absolute;left:556.5px;top:413.65px;font-family:'Liberation Mono',monospace;font-size:11.5px;font-weight:400;color:#24292f;letter-spacing:-0.2px;white-space:pre;line-height:1;">      <span style="color:#24292f">- </span><span style="color:#116329">key</span><span style="color:#24292f">:</span><span style="color:#0a3069"> crossplane-name</span></div>
<div class="abs" style="left:0;top:428px;width:497px;height:19px;background:#f6f8fa"></div>
<div class="abs" style="left:498px;top:428px;width:38px;height:19px;background:#ccffd8"></div>
<div class="abs" style="left:536px;top:428px;width:458px;height:19px;background:#e6ffec"></div>
<div style="position:absolute;left:512.9px;top:432.72px;font-family:'Liberation Mono',monospace;font-size:11.5px;font-weight:400;color:#24292f;letter-spacing:-0.2px;white-space:pre;line-height:1;">30</div>
<div style="position:absolute;left:543px;top:433.72px;font-family:'Liberation Mono',monospace;font-size:11.5px;font-weight:400;color:#24292f;letter-spacing:-0.2px;white-space:pre;line-height:1;">+</div>
<div style="position:absolute;left:556.5px;top:432.72px;font-family:'Liberation Mono',monospace;font-size:11.5px;font-weight:400;color:#24292f;letter-spacing:-0.2px;white-space:pre;line-height:1;">        <span style="color:#116329">value</span><span style="color:#24292f">:</span><span style="color:#0a3069"> &quot;{{ $ms_root.role_name_prefix }}-{{</span></div>
<div class="abs" style="left:0;top:447px;width:497px;height:19px;background:#f6f8fa"></div>
<div class="abs" style="left:498px;top:447px;width:38px;height:19px;background:#ccffd8"></div>
<div class="abs" style="left:536px;top:447px;width:458px;height:19px;background:#e6ffec"></div>
<div style="position:absolute;left:556.5px;top:451.79px;font-family:'Liberation Mono',monospace;font-size:11.5px;font-weight:400;color:#24292f;letter-spacing:-0.2px;white-space:pre;line-height:1;"><span style="color:#0a3069">$ms_root.cluster_name }}-{{ $ms_root.pod_name }}-{{</span></div>
<div class="abs" style="left:0;top:466px;width:497px;height:20px;background:#f6f8fa"></div>
<div class="abs" style="left:498px;top:466px;width:38px;height:20px;background:#ccffd8"></div>
<div class="abs" style="left:536px;top:466px;width:458px;height:20px;background:#e6ffec"></div>
<div style="position:absolute;left:556.5px;top:470.86px;font-family:'Liberation Mono',monospace;font-size:11.5px;font-weight:400;color:#24292f;letter-spacing:-0.2px;white-space:pre;line-height:1;"><span style="color:#0a3069">$policie_entry }}&quot;</span></div>
<div style="position:absolute;left:15.7px;top:489.93px;font-family:'Liberation Mono',monospace;font-size:11.5px;font-weight:400;color:#6e7781;letter-spacing:-0.2px;white-space:pre;line-height:1;">18</div>
<div style="position:absolute;left:58.5px;top:489.93px;font-family:'Liberation Mono',monospace;font-size:11.5px;font-weight:400;color:#24292f;letter-spacing:-0.2px;white-space:pre;line-height:1;">  <span style="color:#116329">providerConfigRef</span><span style="color:#24292f">:</span><span style="color:#0a3069"></span></div>
<div style="position:absolute;left:512.9px;top:489.93px;font-family:'Liberation Mono',monospace;font-size:11.5px;font-weight:400;color:#6e7781;letter-spacing:-0.2px;white-space:pre;line-height:1;">31</div>
<div style="position:absolute;left:556.5px;top:489.93px;font-family:'Liberation Mono',monospace;font-size:11.5px;font-weight:400;color:#24292f;letter-spacing:-0.2px;white-space:pre;line-height:1;">  <span style="color:#116329">providerConfigRef</span><span style="color:#24292f">:</span><span style="color:#0a3069"></span></div>
<div style="position:absolute;left:15.7px;top:509.0px;font-family:'Liberation Mono',monospace;font-size:11.5px;font-weight:400;color:#6e7781;letter-spacing:-0.2px;white-space:pre;line-height:1;">19</div>
<div style="position:absolute;left:58.5px;top:509.0px;font-family:'Liberation Mono',monospace;font-size:11.5px;font-weight:400;color:#24292f;letter-spacing:-0.2px;white-space:pre;line-height:1;">    <span style="color:#116329">name</span><span style="color:#24292f">:</span><span style="color:#0a3069"> {{ $ms_root.provider_config_name }}</span></div>
<div style="position:absolute;left:512.9px;top:509.0px;font-family:'Liberation Mono',monospace;font-size:11.5px;font-weight:400;color:#6e7781;letter-spacing:-0.2px;white-space:pre;line-height:1;">32</div>
<div style="position:absolute;left:556.5px;top:509.0px;font-family:'Liberation Mono',monospace;font-size:11.5px;font-weight:400;color:#24292f;letter-spacing:-0.2px;white-space:pre;line-height:1;">    <span style="color:#116329">name</span><span style="color:#24292f">:</span><span style="color:#0a3069"> {{ $ms_root.provider_config_name }}</span></div>
<div style="position:absolute;left:15.7px;top:528.07px;font-family:'Liberation Mono',monospace;font-size:11.5px;font-weight:400;color:#6e7781;letter-spacing:-0.2px;white-space:pre;line-height:1;">20</div>
<div style="position:absolute;left:512.9px;top:528.07px;font-family:'Liberation Mono',monospace;font-size:11.5px;font-weight:400;color:#6e7781;letter-spacing:-0.2px;white-space:pre;line-height:1;">33</div>
<div class="abs" style="left:497px;top:66px;width:1px;height:477px;background:rgba(208,215,222,0.6)"></div>
<div class="abs" style="left:498px;top:66px;width:1px;height:477px;background:rgba(208,215,222,0.35)"></div>
<div class="abs" style="left:0;top:543px;width:994px;height:27px;background:#ddf4ff"></div>
<div class="abs" style="left:0;top:543px;width:38px;height:27px;background:#bbdfff"></div>
<svg style="position:absolute;left:12px;top:548.5px;" width="15" height="15" viewBox="0 0 16 16" fill="#57606a"><path d="m8.177 14.323 2.896-2.896a.25.25 0 0 0-.177-.427H8.75V7.764a.75.75 0 1 0-1.5 0V11H5.104a.25.25 0 0 0-.177.427l2.896 2.896a.25.25 0 0 0 .354 0ZM2.25 5a.75.75 0 0 0 0-1.5h-.5a.75.75 0 0 0 0 1.5h.5ZM6 4.25a.75.75 0 0 1-.75.75h-.5a.75.75 0 0 1 0-1.5h.5a.75.75 0 0 1 .75.75ZM8.25 5a.75.75 0 0 0 0-1.5h-.5a.75.75 0 0 0 0 1.5h.5ZM12 4.25a.75.75 0 0 1-.75.75h-.5a.75.75 0 0 1 0-1.5h.5a.75.75 0 0 1 .75.75Zm2.25.75a.75.75 0 0 0 0-1.5h-.5a.75.75 0 0 0 0 1.5h.5Z"/></svg>
</div>
</body></html>
